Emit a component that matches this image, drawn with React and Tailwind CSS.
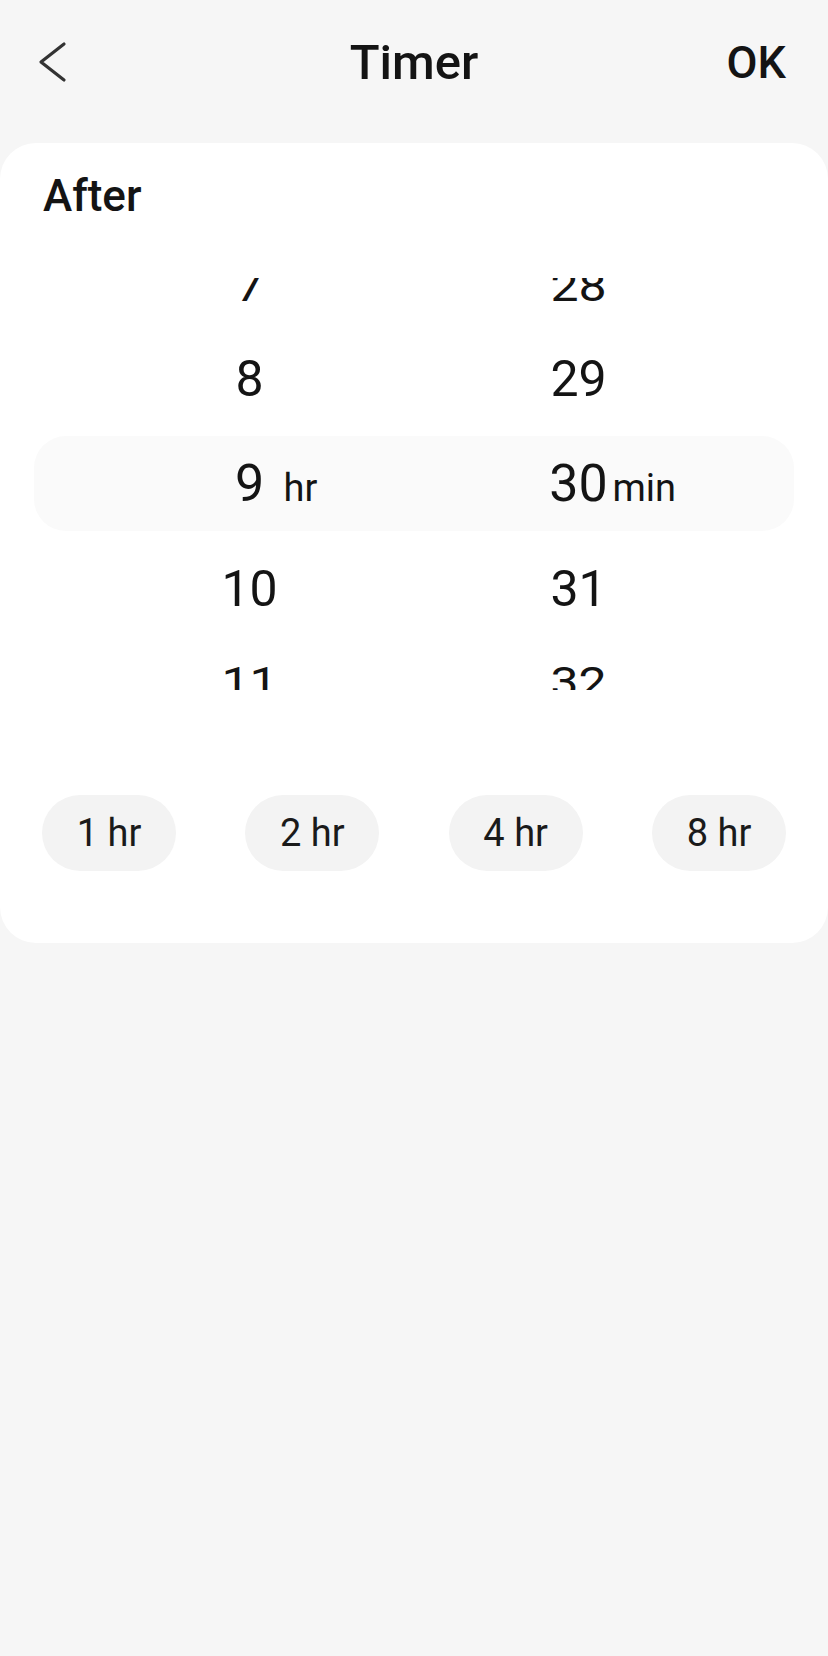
import React from 'react';

const font = { fontFamily: 'Roboto, "Noto Sans", sans-serif' };

function BackIcon() {
  return (
    <svg width="30" height="42" viewBox="0 0 30 42" fill="none" className="block">
      <polyline
        points="26,3 3,21 26,39"
        stroke="#333333"
        strokeWidth="3.2"
        strokeLinecap="round"
        strokeLinejoin="round"
      />
    </svg>
  );
}

// first and last visible rows of the wheel, cut by the picker's edge
function EdgeRow({ left, right, position }) {
  const isTop = position === 'top';
  const cell = isTop
    ? 'h-[48px] overflow-hidden flex items-end justify-center pb-[18px]'
    : 'h-[49px] overflow-hidden flex items-start justify-center pt-[20px]';
  const digit = isTop
    ? 'block shrink-0 leading-none text-[50px] scale-y-[0.85] origin-bottom'
    : 'block shrink-0 leading-none text-[50px] scale-y-[0.85] origin-top';
  return (
    <div className="w-[658px] mx-auto grid grid-cols-2">
      <div className={cell}><span className={digit}>{left}</span></div>
      <div className={cell}><span className={digit}>{right}</span></div>
    </div>
  );
}

function PlainRow({ left, right }) {
  return (
    <div className="h-[105px] w-[658px] mx-auto grid grid-cols-2">
      <div className="flex items-center justify-center">
        <span className="leading-none text-[50px]">{left}</span>
      </div>
      <div className="flex items-center justify-center">
        <span className="leading-none text-[50px]">{right}</span>
      </div>
    </div>
  );
}

function SelectedRow({ left, right }) {
  return (
    <div className="mx-[34px] mt-[5px] mb-[5px] h-[95px] rounded-[32px] bg-[#fafafa]">
      <div className="h-full w-[658px] mx-auto grid grid-cols-2">
        <div className="relative flex items-center justify-center">
          <span className="leading-none text-[52px]">{left}</span>
          <span className="absolute left-[calc(50%+34px)] top-[33px] leading-none text-[38px]">hr</span>
        </div>
        <div className="relative flex items-center justify-center">
          <span className="leading-none text-[52px]">{right}</span>
          <span className="absolute left-[calc(50%+34px)] top-[33px] leading-none text-[38px]">min</span>
        </div>
      </div>
    </div>
  );
}

export default function App() {
  const presets = ['1 hr', '2 hr', '4 hr', '8 hr'];

  return (
    <div className="min-h-[1656px] bg-[#f6f6f6] text-[#141414]" style={font}>
      {/* header */}
      <div className="h-[124px] px-[38px] grid grid-cols-[1fr_auto_1fr] items-center">
        <div className="justify-self-start">
          <BackIcon />
        </div>
        <div className="text-[49px] font-medium leading-none">Timer</div>
        <div className="justify-self-end pr-[4px] text-[45px] font-medium leading-none">OK</div>
      </div>

      {/* card */}
      <div className="mt-[19px] bg-white rounded-[36px] pt-[31px] pb-[72px]">
        <div className="px-[43px] text-[44px] font-medium leading-none">After</div>

        <div className="mt-[60px]">
          <EdgeRow left="7" right="28" position="top" />
          <PlainRow left="8" right="29" />
          <SelectedRow left="9" right="30" />
          <PlainRow left="10" right="31" />
          <EdgeRow left="11" right="32" position="bottom" />
        </div>

        <div className="mt-[105px] px-[42px] flex justify-between">
          {presets.map((p) => (
            <button
              key={p}
              className="w-[134px] h-[76px] rounded-full bg-[#f3f3f3] text-[38px] leading-none text-[#1a1a1a] flex items-center justify-center"
            >
              {p}
            </button>
          ))}
        </div>
      </div>
    </div>
  );
}
